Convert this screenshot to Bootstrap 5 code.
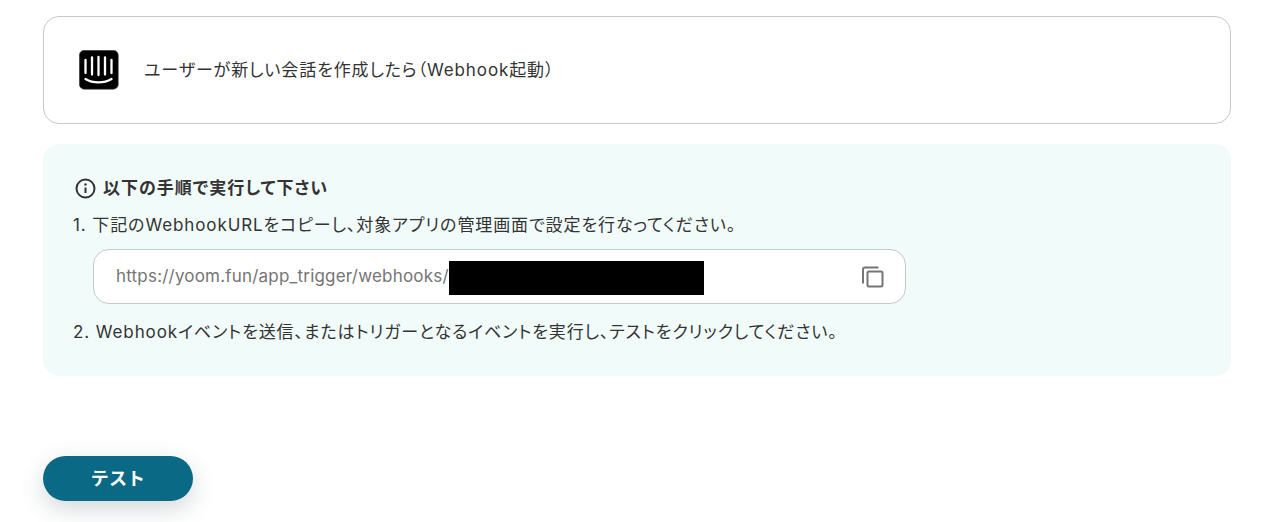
<!DOCTYPE html>
<html lang="ja">
<head>
    <meta charset="UTF-8">
    <title>Webhook</title>
    <link href="https://cdn.jsdelivr.net/npm/bootstrap@5.3.3/dist/css/bootstrap.min.css" rel="stylesheet">
    <style>
        html, body {
          height: 100%;
        }
        body {
          font-family: Inter, "Noto Sans CJK JP", sans-serif;
          font-size: 17px;
          font-feature-settings: "palt";
          letter-spacing: 0.9px;
          color: #333;
          background: #fff;
          overflow: hidden;
        }
        .page-wrap {
          padding: 16px 32px 0 43px;
        }
        .trigger-box {
          height: 108px;
          border: 1px solid #c8c8c8;
          border-radius: 16px;
          padding-left: 35px;
          gap: 25px;
          margin-bottom: 20px;
        }
        .trigger-text {
          padding-top: 2px;
        }
        .guide-box {
          height: 232px;
          background: #f1fbfa;
          border-radius: 16px;
          padding: 32px 31px 0 30px;
          margin-bottom: 80px;
        }
        .guide-title {
          font-weight: 700;
          line-height: 24px;
          letter-spacing: 1px;
          gap: 7px;
          margin-left: 2px;
          margin-bottom: 13px;
        }
        .guide-step {
          line-height: 24px;
        }
        .url-box {
          width: 813px;
          height: 55px;
          margin: 12px 0 16px 20px;
          padding: 0 21px 0 22px;
          background: #fff;
          border: 1px solid #c8c8c8;
          border-radius: 16px;
          color: #757575;
          letter-spacing: 0.2px;
        }
        .url-mask {
          width: 255px;
          height: 34px;
          margin-top: 2px;
          background: #000;
        }
        .test-btn {
          width: 150px;
          height: 45px;
          padding: 0;
          border: 0;
          border-radius: 23px;
          background: #0a6a85;
          color: #fff;
          font-size: 18px;
          font-weight: 700;
          letter-spacing: 0.01em;
          box-shadow: 0 8px 24px rgba(40, 60, 70, 0.2);
        }
    </style>
</head>
<body>

<div class="page-wrap">
    <div class="trigger-box d-flex align-items-center">
        <svg width="40" height="40" viewBox="0 0 40 40" aria-hidden="true">
            <rect x="0.3" y="0.3" width="39" height="39" rx="5" fill="#000" stroke="#555" stroke-width="0.6"/>
            <g stroke="#fff" stroke-width="2.3" stroke-linecap="round" fill="none">
                <path d="M6.500 10v13"/>
                <path d="M13 7.500v17"/>
                <path d="M19.500 7v18"/>
                <path d="M26 7.500v17"/>
                <path d="M32.500 10v13"/>
                <path d="M6.500 29c7.500 4.500 18.500 4.500 26 0"/>
            </g>
        </svg>
        <span class="trigger-text">ユーザーが新しい会話を作成したら（Webhook起動）</span>
    </div>

    <div class="guide-box">
        <div class="guide-title d-flex align-items-center">
            <svg width="21" height="21" viewBox="0 0 21 21" aria-hidden="true">
                <circle cx="10.500" cy="10.500" r="9" fill="none" stroke="#333" stroke-width="2"/>
                <path d="M10.500 9.500v5.500" stroke="#333" stroke-width="2" fill="none"/>
                <circle cx="10.500" cy="6.500" r="1.200" fill="#333"/>
            </svg>
            <span>以下の手順で実行して下さい</span>
        </div>
        <div class="guide-step">1. 下記のWebhookURLをコピーし、対象アプリの管理画面で設定を行なってください。</div>
        <div class="url-box d-flex align-items-center">
            <span>https://yoom.fun/app_trigger/webhooks/</span>
            <span class="url-mask"></span>
            <svg class="ms-auto" width="22" height="22" viewBox="0 0 22 22" aria-hidden="true">
                <path d="M16.500 1.500H3c-1 0-2 1-2 2v14" fill="none" stroke="#757575" stroke-width="2"/>
                <rect x="5.500" y="5.500" width="15" height="15" rx="1.500" fill="none" stroke="#757575" stroke-width="2"/>
            </svg>
        </div>
        <div class="guide-step">2. Webhookイベントを送信、またはトリガーとなるイベントを実行し、テストをクリックしてください。</div>
    </div>

    <button type="button" class="btn test-btn">テスト</button>
</div>

<script src="https://cdn.jsdelivr.net/npm/bootstrap@5.3.3/dist/js/bootstrap.bundle.min.js"></script>
</body>
</html>
